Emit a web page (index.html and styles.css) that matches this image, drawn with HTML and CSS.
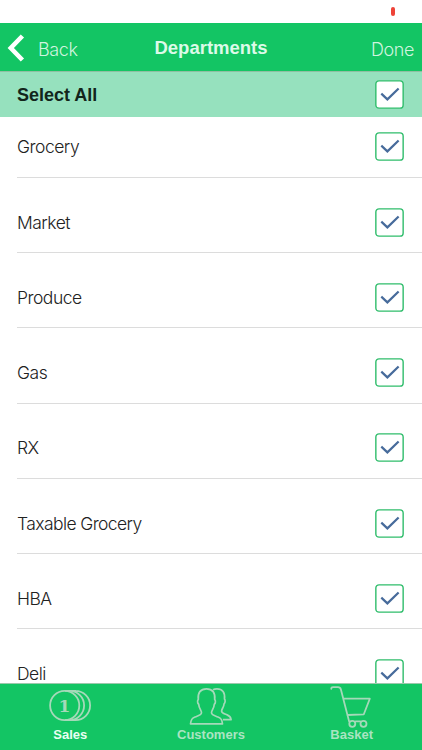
FILE: index.html
```html
<!DOCTYPE html>
<html lang="en">
<head>
<meta charset="utf-8">
<title>Departments</title>
<link rel="stylesheet" href="styles.css">
</head>
<body>
<svg class="defs" aria-hidden="true">
  <symbol id="check" viewBox="0 0 29 29">
    <rect x=".85" y=".85" width="27.3" height="27.3" rx="3.2" fill="#fff" stroke="#2fbd6b" stroke-width="1.4"/>
    <path d="M6.3 13.6 12.4 19.400 23.6 8.500" fill="none" stroke="#476b9b" stroke-width="2.2"/>
  </symbol>
</svg>
<div class="app">
  <div class="status"><span class="rec"></span></div>
  <header class="nav">
    <a class="back"><svg class="chevron" viewBox="0 0 18 28"><path d="M15.4 2 3.8 14 15.4 26" fill="none" stroke="#fff" stroke-width="4.6"/></svg><span class="back-text">Back</span></a>
    <h1 class="title">Departments</h1>
    <a class="done">Done</a>
  </header>
  <div class="select-all"><span class="all-text">Select All</span><svg class="box"><use href="#check"/></svg></div>
  <main class="list">
    <div class="row first"><span>Grocery</span><svg class="box"><use href="#check"/></svg></div>
    <div class="row"><span>Market</span><svg class="box"><use href="#check"/></svg></div>
    <div class="row"><span>Produce</span><svg class="box"><use href="#check"/></svg></div>
    <div class="row"><span>Gas</span><svg class="box"><use href="#check"/></svg></div>
    <div class="row"><span>RX</span><svg class="box"><use href="#check"/></svg></div>
    <div class="row"><span class="long">Taxable Grocery</span><svg class="box"><use href="#check"/></svg></div>
    <div class="row"><span>HBA</span><svg class="box"><use href="#check"/></svg></div>
    <div class="row"><span>Deli</span><svg class="box"><use href="#check"/></svg></div>
  </main>
  <nav class="tabs">
    <a class="tab active">
      <svg class="icon" viewBox="0 0 46 42"><g fill="none" stroke="#a5d9b9" stroke-width="1.8"><circle cx="17.7" cy="21.5" r="14.6"/><path d="M22.5 6.9a14.6 14.6 0 0 1 0 29.2M28.5 6.9a14.6 14.6 0 0 1 0 29.2M18 6.9h11M18 36.100h11"/></g><text class="coin" x="17.5" y="27.7" text-anchor="middle">1</text></svg>
      <span>Sales</span>
    </a>
    <a class="tab">
      <svg class="icon" viewBox="0 0 46 42"><g fill="none" stroke="#a5d9b9" stroke-width="1.7" stroke-linejoin="round"><path d="M2.500 39.8c.5-4.5 1.500-5.500 4-6.500 3.800-1.500 7-2.400 7-4.500 0-2.500-2.500-4-2.800-8.500-1.300-.8-1.500-4-.4-4.800C9.500 8.800 12.500 4.800 18.500 4.800s9 4 8.200 10.700c1.100.8.900 4-.4 4.800-.3 4.500-2.800 6-2.800 8.500 0 2.100 3.200 3 7 4.500 2.500 1 3.500 2 4 6.500z"/><path d="M25 5.800c1.200-.8 2.500-1 4-1 5.500 0 8.200 3.700 7.500 10.200 1 .8.800 4-.4 4.700-.3 4-2.500 5-2.500 7.500 0 2 2.500 2.500 5.500 3.700 2.500 1 3.500 1.700 4 4.700h-8.200"/></g></svg>
      <span>Customers</span>
    </a>
    <a class="tab">
      <svg class="icon" viewBox="0 0 46 42"><g fill="none" stroke="#a5d9b9" stroke-width="1.8" stroke-linecap="round" stroke-linejoin="round"><path d="M2.300 4.800v-.2q0-1.400 1.700-1.400h5q2.300 0 2.900 2.200l8.200 32M14.500 14.700h26.300l-6 15.600-16.500.7"/><path d="M26.700 37.400h4.600"/><circle cx="23.300" cy="39.800" r="3"/><circle cx="34.500" cy="39.800" r="3"/></g></svg>
      <span>Basket</span>
    </a>
  </nav>
</div>
</body>
</html>
```
FILE: styles.css
```css
* { box-sizing: border-box; }
body { margin: 0; background: #fff; font-family: Inter, "Liberation Sans", sans-serif; }
.defs { position: absolute; width: 0; height: 0; }
.app { display: flex; flex-direction: column; width: 422px; height: 750px; overflow: hidden; }
.status { flex: none; height: 23px; display: flex; justify-content: flex-end; padding: 7px 27px 0 0; }
.rec { width: 4px; height: 9px; border-radius: 2px; background: #ee4338; }
.nav { flex: none; height: 49px; display: grid; grid-template-columns: 1fr auto 1fr; background: #13c564; border-bottom: 1px solid #8fbfa2; color: #fff; }
.back { display: flex; align-items: flex-start; padding: 11px 0 0 7px; }
.chevron { width: 18px; height: 28px; }
.back-text, .done { font-size: 18px; line-height: 22px; font-weight: 300; color: #cff4df; letter-spacing: -0.4px; }
.back-text { margin: 5px 0 0 13px; }
.title { margin: 14px 0 0; font: bold 18.5px/22px "Liberation Sans", sans-serif; color: #dcfae8; letter-spacing: 0; }
.done { justify-self: end; margin: 16px 8px 0 0; }
.select-all { flex: none; height: 45px; display: flex; justify-content: space-between; align-items: center; padding: 0 18px 0 17px; background: #96e1be; }
.all-text { font: bold 18px/22px "Liberation Sans", sans-serif; color: #12251b; }
.box { width: 29px; height: 29px; flex: none; }
.list { flex: 1; min-height: 0; overflow: hidden; padding-left: 17px; }
.row { height: 75.25px; display: flex; justify-content: space-between; align-items: flex-end; padding: 0 18px 15.5px 0; border-bottom: 1px solid #dcdcdc; color: #222; font-size: 17.5px; line-height: 29px; font-weight: 300; letter-spacing: -0.5px; }
.long { letter-spacing: -0.6px; }
.first { height: 60.8px; padding-bottom: 16px; }
.tabs { flex: none; height: 67px; display: grid; grid-template-columns: repeat(3, 1fr); background: #13c564; border-top: 1px solid #9cc8ac; }
.tab { display: flex; flex-direction: column; align-items: center; color: #a9e4c1; font: bold 13px/17px "Liberation Sans", sans-serif; letter-spacing: 0; }
.active { color: #e9fff2; }
.icon { width: 46px; height: 42px; overflow: visible; }
.coin { font: bold 17px "DejaVu Serif", serif; fill: #a5d9b9; }
```
